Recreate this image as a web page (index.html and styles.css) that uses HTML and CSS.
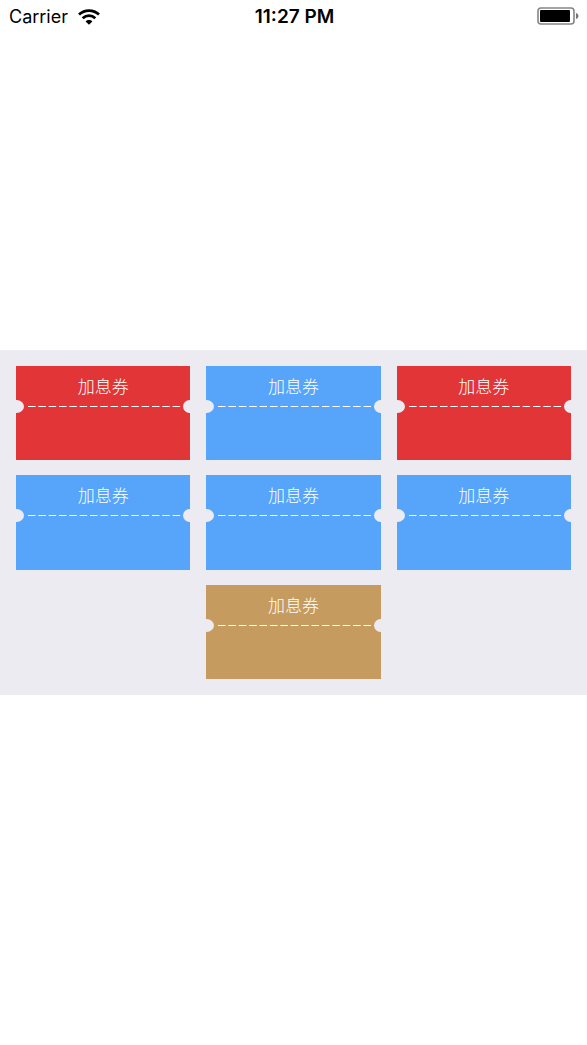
FILE: index.html
```html
<!DOCTYPE html>
<html lang="zh-CN">
<head>
<meta charset="utf-8">
<meta name="viewport" content="width=device-width, initial-scale=1">
<title>加息券</title>
<link rel="stylesheet" href="styles.css">
</head>
<body>
<div class="screen">
  <header class="status">
    <div class="carrier">
      <span>Carrier</span>
      <svg class="wifi" width="22" height="16" viewBox="0 0 22 16" aria-hidden="true">
        <path d="M1 5.6C6.7 .2 15.3 .2 21 5.6" fill="none" stroke="#000" stroke-width="2.8"/>
        <path d="M4.7 9.3C8.3 5.8 13.7 5.8 17.3 9.3" fill="none" stroke="#000" stroke-width="2.7"/>
        <path d="M7.6 12.4C9.5 10.5 12.5 10.5 14.4 12.4L11 15.8Z" fill="#000"/>
      </svg>
    </div>
    <time class="clock">11:27 PM</time>
    <svg class="battery" width="43" height="18" viewBox="0 0 43 18" aria-hidden="true">
      <rect x="1" y="1" width="36" height="16" rx="3" fill="#fff" stroke="#858585" stroke-width="1.6"/>
      <rect x="3" y="3" width="30" height="12" rx="1" fill="#000"/>
      <path d="M39 6C42.300 7 42.300 11 39 12Z" fill="#777"/>
    </svg>
  </header>
  <main class="panel">
    <article class="coupon red"><h2 class="name">加息券</h2><div class="tear"><i class="notch left"></i><i class="dashes"></i><i class="notch right"></i></div></article>
    <article class="coupon blue"><h2 class="name">加息券</h2><div class="tear"><i class="notch left"></i><i class="dashes"></i><i class="notch right"></i></div></article>
    <article class="coupon red"><h2 class="name">加息券</h2><div class="tear"><i class="notch left"></i><i class="dashes"></i><i class="notch right"></i></div></article>
    <article class="coupon blue"><h2 class="name">加息券</h2><div class="tear"><i class="notch left"></i><i class="dashes"></i><i class="notch right"></i></div></article>
    <article class="coupon blue"><h2 class="name">加息券</h2><div class="tear"><i class="notch left"></i><i class="dashes"></i><i class="notch right"></i></div></article>
    <article class="coupon blue"><h2 class="name">加息券</h2><div class="tear"><i class="notch left"></i><i class="dashes"></i><i class="notch right"></i></div></article>
    <article class="coupon gold"><h2 class="name">加息券</h2><div class="tear"><i class="notch left"></i><i class="dashes"></i><i class="notch right"></i></div></article>
  </main>
</div>
</body>
</html>
```
FILE: styles.css
```css
* {
  box-sizing: border-box;
}

body {
  margin: 0;
  background: #fff;
  color: #000;
  font-family: Inter, "Liberation Sans", "Noto Sans CJK SC", sans-serif;
}

.screen {
  display: grid;
  grid-template-columns: minmax(0, 1fr);
  grid-template-rows: 1fr auto 1fr;
  min-height: 100vh;
}

.status {
  display: grid;
  grid-template-columns: 1fr auto 1fr;
  align-items: center;
  align-self: start;
  height: 32px;
  padding: 0 7px 0 9px;
  font-size: 19px;
  line-height: 24px;
}

.carrier {
  display: flex;
  align-items: center;
  gap: 10px;
  padding-top: 1px;
  font-size: 18px;
}

.clock {
  padding-top: 2px;
  font-weight: 600;
}

.battery {
  justify-self: end;
}

.panel {
  display: grid;
  grid-template-columns: repeat(3, minmax(0, 1fr));
  gap: 15px 16px;
  align-items: start;
  padding: 16px;
  background: #ebebf1;
}

.coupon {
  width: 100%;
  aspect-ratio: 24 / 13;
  color: #fff;
}

.red {
  background: #e13538;
}

.blue {
  background: #56a5fb;
}

.gold {
  grid-column: 2;
  background: #c69b5f;
}

.name {
  margin: 0;
  padding: 7px 0 2px;
  font-family: "Noto Sans CJK SC", sans-serif;
  font-size: 17px;
  font-weight: 300;
  line-height: 25px;
  text-align: center;
}

.tear {
  display: flex;
  align-items: center;
  height: 13px;
}

.notch {
  height: 13px;
  background: #ebebf1;
}

.left {
  width: 8px;
  border-radius: 0 8px 8px 0 / 0 7px 7px 0;
}

.right {
  width: 7px;
  border-radius: 7px 0 0 7px;
}

.dashes {
  flex: 1;
  height: 1px;
  margin-left: 4px;
  background: linear-gradient(90deg, #fff 76%, transparent 76%) 0 0 / calc(100% / 15) 1px;
}
```
